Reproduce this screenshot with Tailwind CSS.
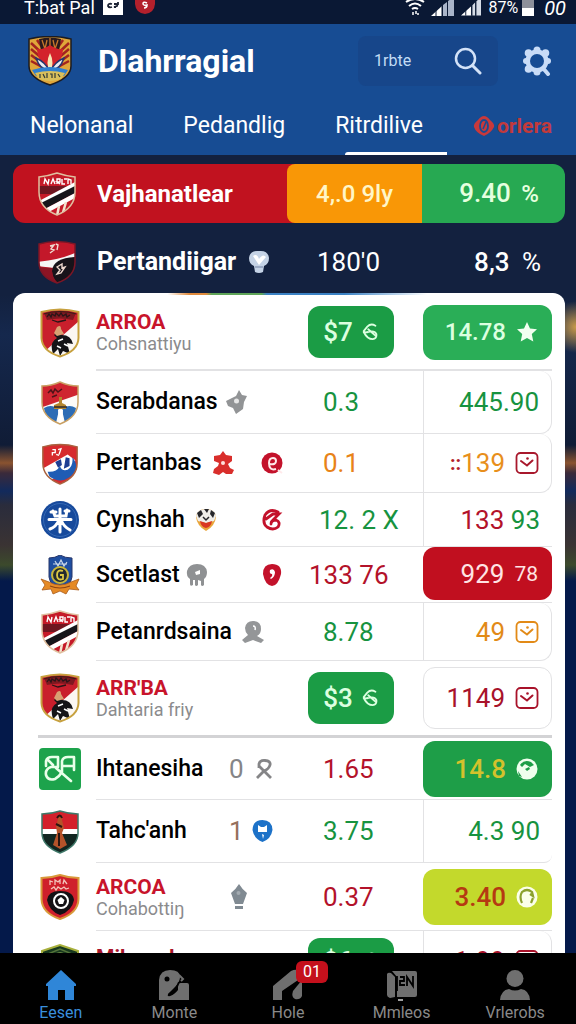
<!DOCTYPE html>
<html lang="id">

<head>
    <meta charset="UTF-8">
    <meta name="viewport" content="width=device-width, initial-scale=1.0">
    <title>Dlahrragial</title>
    <script src="https://cdn.jsdelivr.net/npm/@tailwindcss/browser@4"></script>
</head>

<body class="flex h-screen flex-col overflow-hidden bg-[#13213f] font-[Roboto,'Liberation_Sans',sans-serif]">
    <!-- Shared crests and icons -->
    <svg class="h-0 w-0 shrink-0" aria-hidden="true">
        <symbol id="crest-garuda" viewBox="0 0 44 50">
            <path d="M1 3Q22-2 43 3V30Q43 42 22 49Q1 42 1 30Z" fill="#e0a63a" stroke="#1c1b20" stroke-width="1.5" />
            <path d="M3 7l14 13M3 13l13 11M3 19l12 9M3 25l11 6M9 4l10 14M41 7L27 20M41 13L28 24M41 19L29 28M41 25L30 31M35 4L25 18" stroke="#a3231f" stroke-width="2.5" />
            <path d="M11 3Q22 0 33 3L31 15H13Z" fill="#2a1a1c" />
            <path d="M14 4l3 9 2-9M22 2v11M30 4l-3 9-2-9" fill="none" stroke="#c7772a" stroke-width="1.3" />
            <path d="M22 9Q15 14 9 13Q10 28 22 33Q34 28 35 13Q29 14 22 9Z" fill="#d3232b" />
            <path d="M8 22Q12 34 21 34Q17 26 8 22ZM36 22Q32 34 23 34Q27 26 36 22Z" fill="#e9ecf2" stroke="#26366e" stroke-width="1.5" />
            <path d="M22 17Q17 27 22 36Q27 27 22 17Z" fill="#f6e7b5" />
            <path d="M4 34Q22 28 40 34L36 40Q22 35 8 40Z" fill="#2f7fd0" />
            <path d="M7 37Q22 33 37 37L33 43Q22 47 11 43Z" fill="#d9bf5b" />
            <path d="M12 38v4M15 38l2 4M19 37v5M22 38h2v4M27 37v5M30 38l2 3" stroke="#2c3a3a" stroke-width="1.2" fill="none" />
        </symbol>

        <symbol id="crest-stripes" viewBox="0 0 40 44">
            <clipPath id="clip-stripes"><path d="M2 5Q11 4 20 1Q29 4 38 5V20Q38 36 20 43Q2 36 2 20Z" /></clipPath>
            <g clip-path="url(#clip-stripes)">
                <path d="M0 0h40v44H0z" fill="#c51a28" />
                <path d="M0 14h40v8H0z" fill="#6f1620" />
                <path d="M-2 31L40 9V14L0 36Z" fill="#fff" />
                <path d="M-2 34L40 13V20L4 39Z" fill="#16151a" />
                <path d="M4 39L40 20V25L8 42Z" fill="#fff" />
                <path d="M22 34L20 44M29 30l-4 14" stroke="#f3e3cf" stroke-width="2.5" />
            </g>
            <path d="M7 12l1-5 3 5 1-5M14 12l2-5 2 5M20 12V7h3v3h-3l3 2M25 7v5h3M30 7h-3M31 12V7l3 1v4" fill="none" stroke="#fff" stroke-width="1.4" />
            <path d="M2 5Q11 4 20 1Q29 4 38 5V20Q38 36 20 43Q2 36 2 20Z" fill="none" stroke="#e0c0a0" stroke-width="1.5" />
        </symbol>

        <symbol id="crest-falcon" viewBox="0 0 40 44">
            <clipPath id="clip-falcon"><path d="M2 4Q20-1 38 4V22Q38 37 20 43Q2 37 2 22Z" /></clipPath>
            <g clip-path="url(#clip-falcon)">
                <path d="M0 0h40v44H0z" fill="#c3182a" />
                <path d="M0 22Q22 20 38 13L40 17Q22 20 17 28L0 26Z" fill="#f5f5f5" />
                <path d="M38 17Q16 18 15 31Q16 42 24 46L42 40V17Z" fill="#17131a" />
                <path d="M0 27L15 28Q14 37 22 44H0Z" fill="#8c1424" />
            </g>
            <path d="M13 6l4-1-3 4 3 1-4 3M19 4l2 1-1 5M20 27l5-3v4l3-1-4 6-4 1 3-4z" fill="none" stroke="#efd9cf" stroke-width="1.4" />
            <path d="M2 4Q20-1 38 4V22Q38 37 20 43Q2 37 2 22Z" fill="none" stroke="#7c1626" stroke-width="1.5" />
        </symbol>

        <symbol id="crest-arroa" viewBox="0 0 40 50">
            <clipPath id="clip-arroa"><path d="M1.5 4Q20-1 38.5 4V30Q38 43 20 48.5Q2 43 1.5 30Z" /></clipPath>
            <g clip-path="url(#clip-arroa)">
                <path d="M0 0h40v50H0z" fill="#fbf7f3" />
                <path d="M0 0h40v12L4 44H0z" fill="#c91f2c" />
                <path d="M4 5Q20 1 36 5L33 12Q20 9 7 12Z" fill="#7f1820" />
                <path d="M12 42Q10 34 17 30L14 27Q18 22 22 27Q31 27 33 36L27 35L30 46L23 43L20 48L18 41L13 46Z" fill="#151417" />
                <path d="M17 19q4-3 4 2l3 5-7 2-3-3z" fill="#d8a072" />
                <path d="M18 33l5-2M24 36l4 2M17 38l4 2" stroke="#fff" stroke-width="1.5" />
            </g>
            <path d="M7 9l2-3 2 3 1-3 3 2 1-3 3 3 2-3 2 3 3-2 1 3 3-2M12 12l6 2 8-2" fill="none" stroke="#2a1517" stroke-width="1.3" />
            <path d="M1.5 4Q20-1 38.5 4V30Q38 43 20 48.5Q2 43 1.5 30Z" fill="none" stroke="#c7a13f" stroke-width="2" />
            <path d="M3.5 6Q20 1 36.5 6" fill="none" stroke="#3b1c18" stroke-width="1" />
        </symbol>

        <symbol id="crest-tower" viewBox="0 0 40 44">
            <clipPath id="clip-tower"><path d="M2 5Q11 5 20 1Q29 5 38 5V21Q38 36 20 43Q2 36 2 21Z" /></clipPath>
            <g clip-path="url(#clip-tower)">
                <path d="M0 0h40v44H0z" fill="#fdfbf8" />
                <path d="M0 0h40v13L0 27z" fill="#cf2530" />
                <path d="M4 27Q12 22 19 29L16 42L6 38ZM36 27Q28 22 22 29L25 42L34 38Z" fill="#2d6cb5" />
                <path d="M19 16h3v6l4 2v4H14v-4l5-2z" fill="#b5862d" />
                <path d="M18 29h5l-1 14h-3z" fill="#fff" />
                <path d="M14 26h13" stroke="#2e2a2b" stroke-width="1.5" />
            </g>
            <path d="M8 12l3-3 2 3 2-4 3 3 4-3M12 16l5-2" fill="none" stroke="#4e1418" stroke-width="1.5" />
            <path d="M2 5Q11 5 20 1Q29 5 38 5V21Q38 36 20 43Q2 36 2 21Z" fill="none" stroke="#c9a063" stroke-width="1.5" />
        </symbol>

        <symbol id="crest-wave" viewBox="0 0 40 44">
            <clipPath id="clip-wave"><path d="M2 4Q20-1 38 4V21Q38 36 20 43Q2 36 2 21Z" /></clipPath>
            <g clip-path="url(#clip-wave)">
                <path d="M0 0h40v44H0z" fill="#d62b2e" />
                <path d="M0 28L28 12L36 18L34 30L0 42Z" fill="#fff" />
                <path d="M7 30Q16 31 20 24Q22 30 28 28Q34 24 33 15Q42 26 30 36Q20 43 9 35Z" fill="#1f5cb4" />
                <path d="M15 20l6-3 1 6-4 3zM26 15l4 1v8l-6 3z" fill="#1d3e93" />
            </g>
            <path d="M12 7h3v3h-3v3M18 7l3-1-2 6M16 12l3 1" fill="none" stroke="#fff" stroke-width="1.4" />
            <path d="M2 4Q20-1 38 4V21Q38 36 20 43Q2 36 2 21Z" fill="none" stroke="#a9623f" stroke-width="1.5" />
        </symbol>

        <symbol id="crest-round" viewBox="0 0 40 40">
            <circle cx="20" cy="20" r="19" fill="#174a9c" />
            <circle cx="20" cy="20" r="16.5" fill="none" stroke="#3468b4" stroke-width="1" />
            <path d="M20 9V32M9 19.500H31M13 11l2 5 5 0M27 10l-1 6h-5M19 20Q16 27 10 29M21 20Q24 27 30 30M11 12h5M25 11h4" fill="none" stroke="#fff" stroke-width="3" stroke-linecap="round" />
        </symbol>

        <symbol id="crest-ribbon" viewBox="0 0 40 40">
            <path d="M9 3Q15 3 20 0Q25 3 32 3V22Q31 30 20 34Q10 30 9 22Z" fill="#1f4ea0" stroke="#27366b" />
            <path d="M13 9h14M15 6l3 5 3-6 3 6 3-4" stroke="#c9d6e8" stroke-width="1.2" fill="none" />
            <path d="M1 24L9 27Q20 33 31 27L39 24L36 31L39 35L29 34L26 39L20 36L13 39L11 34L2 35L5 30Z" fill="#e58a26" stroke="#a85a1c" stroke-width=".8" />
            <circle cx="20" cy="20" r="8" fill="#252b2e" stroke="#c9b63b" stroke-width="2" />
            <path d="M23 16q-6-2-6 4t6 4v-4h-3" fill="none" stroke="#dcc846" stroke-width="1.8" />
            <path d="M10 31Q20 35 30 31" fill="none" stroke="#8a4315" stroke-width="1.2" />
        </symbol>

        <symbol id="crest-figure" viewBox="0 0 40 44">
            <clipPath id="clip-figure"><path d="M2 4Q11 4 20 1Q29 4 38 4V23Q38 36 20 43Q2 36 2 23Z" /></clipPath>
            <g clip-path="url(#clip-figure)">
                <path d="M0 0h40v20H0z" fill="#d3202b" />
                <path d="M0 19h40v5H0z" fill="#fff" />
                <path d="M0 24h40v20H0z" fill="#122621" />
                <path d="M19 5q5 0 3 5l2 8-2 5 5 12-7 4-7-4 4-12-1-7z" fill="#b5532a" />
                <path d="M17 8q3-5 5 0M16 14l6 3M19 23v13" stroke="#2b1511" stroke-width="2" fill="none" />
            </g>
            <path d="M2 4Q11 4 20 1Q29 4 38 4V23Q38 36 20 43Q2 36 2 23Z" fill="none" stroke="#3e7768" stroke-width="1.5" />
        </symbol>

        <symbol id="crest-ball" viewBox="0 0 40 46">
            <path d="M1.5 4Q11 4 20 1Q29 4 38.5 4V25Q38 39 20 45Q2 39 1.5 25Z" fill="#cf202b" stroke="#d9993a" stroke-width="2" />
            <path d="M7 26Q8 17 20 17Q33 17 34 26Q32 37 20 41Q9 37 7 26Z" fill="#141215" />
            <circle cx="21" cy="27" r="7" fill="#141215" stroke="#fff" stroke-width="2" />
            <path d="M21 23l3.5 3-1.5 4h-4l-1.5-4z" fill="#fff" />
            <path d="M10 11V7l3 1M15 11V6l3 2 2-2v4M23 10l1-4 3 4M11 15l3-2 2 3 2-3 3 2 3-2 2 2 3-1" fill="none" stroke="#f3c4ba" stroke-width="1.3" />
        </symbol>

        <symbol id="crest-green" viewBox="0 0 40 46">
            <path d="M2 7L20 1L38 7V25Q38 39 20 45Q2 39 2 25Z" fill="#17381e" stroke="#a8b03c" stroke-width="2" />
            <circle cx="20" cy="17" r="8" fill="#0f2415" stroke="#7f9a4b" stroke-width="1.5" />
            <path d="M8 10l12-5 12 5" fill="none" stroke="#56753a" stroke-width="1.5" />
        </symbol>

        <symbol id="icon-mail" viewBox="0 0 24 24">
            <rect x="1.5" y="2" width="21" height="20" rx="4" fill="none" stroke="currentColor" stroke-width="1.8" />
            <path d="M6 10l6 4.5L17.5 9.500" fill="none" stroke="currentColor" stroke-width="2" stroke-linecap="round" />
            <circle cx="12.500" cy="7.500" r="1.300" fill="currentColor" />
        </symbol>

        <symbol id="icon-leaf" viewBox="0 0 20 20">
            <path d="M16 3Q11 0 7 4L3 9Q3 11 8 10Q15 8 17 12Q18 17 13 18Q7 18 3 10M8 7L16 14" fill="none" stroke="currentColor" stroke-width="2" stroke-linecap="round" stroke-linejoin="round" />
        </symbol>
    </svg>

    <!-- Status bar -->
    <div class="flex h-6 shrink-0 items-start bg-[#0a1834] pr-2.5 pl-6 text-lg leading-4 text-white">
        <span class="whitespace-nowrap">T:bat Pal</span>
        <svg class="ml-2 h-[15px] w-5" viewBox="0 0 20 15">
            <path d="M0 0h20v15H0z" fill="#fff" />
            <path d="M9 4Q5 3 5 6Q6 8 9 7M11 4h2q2 0 1 2l-3 1h2M15 2v3" fill="none" stroke="#1b2233" stroke-width="1.8" />
        </svg>
        <svg class="ml-3 h-[14px] w-5" viewBox="0 0 20 14">
            <path d="M0 0H20Q21 13 10 14Q-1 13 0 0Z" fill="#b3202c" />
            <path d="M12 3Q8 1 8 4Q9 6 12 5Q12 8 9 8" fill="none" stroke="#fff" stroke-width="1.6" />
        </svg>
        <svg class="ml-auto h-4 w-5" viewBox="0 0 20 16" fill="none" stroke="#fff" stroke-width="2">
            <path d="M1 2Q10-4 19 2M4 6Q10 1 16 6M7 9Q10 7 13 9" />
            <path d="M8 12v3M11 11v3M13 13v2" stroke-width="1.5" />
        </svg>
        <svg class="ml-1.5 h-4 w-6" viewBox="0 0 24 16">
            <path d="M0 16L11 6V16Z" fill="#fff" />
            <path d="M12 5l4-3v14h-4zM17 1l6-4v19h-6z" fill="#a9b4c9" />
            <path d="M5 9v7M11 4v12M16.500 0v16" stroke="#0a1834" />
        </svg>
        <svg class="ml-1.5 h-4 w-5" viewBox="0 0 21 16">
            <path d="M0 16L11 6V16Z" fill="#fff" />
            <path d="M12 5l3-3v14h-3zM16 1l5-4v19h-5z" fill="#d5dbe6" />
            <path d="M5 9v7M11 4v12M15.500 0v16" stroke="#0a1834" />
        </svg>
        <span class="ml-2 text-base leading-4">87%</span>
        <span class="ml-1 flex h-4 w-3 flex-col"><span class="h-2 bg-[#8d909a]"></span><span class="h-2 bg-white"></span></span>
        <span class="ml-2.5 text-xl leading-4 italic">00</span>
    </div>

    <!-- Header -->
    <header class="shrink-0 bg-[#174c93] text-white">
        <div class="flex h-[73px] items-center pr-6 pl-7">
            <svg class="h-[50px] w-11"><use href="#crest-garuda" /></svg>
            <h1 class="ml-[26px] text-[32px] leading-10 font-bold">Dlahrragial</h1>
            <div class="ml-auto flex h-[50px] w-[140px] items-center justify-between rounded-lg bg-[#17468a] pr-4 pl-4">
                <input type="text" aria-label="Search" placeholder="1rbte" class="w-14 bg-transparent text-base text-white outline-none placeholder:text-[#c3dcf5]">
                <button aria-label="Search" class="cursor-pointer">
                    <svg class="h-7 w-7" viewBox="0 0 28 28" fill="none" stroke="#d3e2f8" stroke-width="2.5" stroke-linecap="round">
                        <circle cx="11.5" cy="11.5" r="9.5" />
                        <path d="M18.5 18.5L26 26" stroke-width="3" />
                    </svg>
                </button>
            </div>
            <button aria-label="Settings" class="ml-6 cursor-pointer">
                <svg class="h-[30px] w-[30px]" viewBox="0 0 30 30">
                    <g fill="#c9dcf7">
                        <circle cx="15" cy="15" r="11.5" />
                        <circle cx="15" cy="4" r="3.5" />
                        <circle cx="23.5" cy="7" r="3.8" />
                        <circle cx="26" cy="15" r="3" />
                        <circle cx="6.5" cy="7" r="3.8" />
                        <circle cx="4" cy="15" r="3" />
                        <circle cx="6.5" cy="23" r="3.8" />
                        <circle cx="15" cy="26" r="3.5" />
                    </g>
                    <path d="M20 21l6 7" stroke="#c9dcf7" stroke-width="4" stroke-linecap="round" />
                    <circle cx="15" cy="15" r="7" fill="#174c93" />
                </svg>
            </button>
        </div>
        <nav class="flex h-[58px] gap-[50px] pl-[30px] text-[23px] leading-[58px] whitespace-nowrap">
            <a href="#">Nelonanal</a>
            <a href="#">Pedandlig</a>
            <a href="#" class="relative">Ritrdilive
                <span class="absolute -right-6 bottom-0 left-2.5 h-[3px] rounded-tl-full bg-white"></span>
            </a>
            <a href="#" class="flex items-center gap-0.5 text-[21px] font-bold text-[#c23a3c]">
                <svg class="h-[22px] w-[22px]" viewBox="0 0 22 22">
                    <path d="M11 1Q14 1 17 5Q22 9 21 12Q18 18 11 21Q3 18 1 12Q0 9 5 5Q8 1 11 1Z" fill="#c8393b" />
                    <ellipse cx="11" cy="11" rx="4" ry="6" fill="none" stroke="#174c93" stroke-width="1.8" />
                    <path d="M10 14l3-7" stroke="#174c93" stroke-width="1.5" />
                </svg>
                orlera
            </a>
        </nav>
    </header>

    <main class="min-h-0 flex-1 overflow-y-auto bg-[radial-gradient(circle_at_100%_172px,#c99a4a_0,#c99a4a00_26px),linear-gradient(#13213f_0,#13213f_140px,#15284d_180px,#101c36_290px,#8a5330_308px,#3b2a3a_318px,#122a5c_336px,#2a2c3c_350px,#3a3333_390px,#3c4a2c_410px,#04194a_426px)] pr-[11px] pl-[13px] [scrollbar-width:none]">
        <!-- Leaders -->
        <table class="mt-[9px] w-full table-fixed border-separate border-spacing-0 text-[26px] text-white">
            <tbody>
                <tr class="h-[59px]">
                    <td class="rounded-l-xl bg-[#c1121f] p-0">
                        <div class="flex items-center pl-6">
                            <svg class="h-11 w-10"><use href="#crest-stripes" /></svg>
                            <span class="ml-5 text-2xl font-bold">Vajhanatlear</span>
                        </div>
                    </td>
                    <td class="w-[135px] bg-[#c1121f] p-0"><div class="flex h-[59px] items-center justify-center rounded-l-lg bg-[#f99706] text-2xl font-medium text-[#fff6c8]">4,.0 9ly</div></td>
                    <td class="w-[143px] rounded-r-xl bg-[#27a952] p-0 pr-[26px] text-right font-medium text-[#e6ffdf]">9.40 <span class="ml-1 text-2xl">%</span></td>
                </tr>
                <tr class="h-[70px]">
                    <td class="p-0 pt-2">
                        <div class="flex items-center pl-6">
                            <svg class="h-11 w-10"><use href="#crest-falcon" /></svg>
                            <span class="ml-5 text-[25px] font-bold">Pertandiigar</span>
                            <svg class="ml-3 h-6 w-[22px] shrink-0" viewBox="0 0 22 24">
                                <path d="M11 1Q20 0 21 8Q21 14 16 16L15 22Q11 24 7 22L6 16Q1 14 1 8Q2 0 11 1Z" fill="#c5d3e6" />
                                <path d="M5 6Q9 3 11 9Q15 3 18 7L11 15Z" fill="#fff" />
                                <path d="M7 17h8" stroke="#8d9db8" stroke-width="1.5" />
                            </svg>
                        </div>
                    </td>
                    <td class="p-0 pt-2 pl-[30px]">180'0</td>
                    <td class="p-0 pt-2 pr-6 text-right font-medium">8,3 <span class="ml-1.5 font-normal">%</span></td>
                </tr>
            </tbody>
        </table>

        <!-- Standings -->
        <div class="overflow-hidden rounded-xl bg-white">
            <div class="h-0.5 bg-[linear-gradient(90deg,transparent_28%,#e08a3c_32%,#e08a3c_35%,#5fa558_36%,#5fa558_45%,#3b82c4_46%,#3b82c4_60%,transparent_75%)]"></div>
            <div class="pr-[13px] pl-[25px]">
                <table class="w-full table-fixed border-separate border-spacing-0 text-[26px] leading-7">
                    <colgroup>
                        <col class="w-[58px]">
                        <col>
                        <col class="w-[114px]">
                        <col class="w-[129px]">
                    </colgroup>
                    <tbody>
                        <tr class="h-[76px]">
                            <td class="p-0"><svg class="ml-0.5 h-[50px] w-10"><use href="#crest-arroa" /></svg></td>
                            <td class="border-b-2 border-[#e2e2e4] p-0">
                                <div class="text-[21px] leading-6 font-bold text-[#c8142b]">ARROA</div>
                                <div class="text-lg leading-5 text-[#8b8b8d]">Cohsnattiyu</div>
                            </td>
                            <td class="border-b-2 border-[#e2e2e4] p-0">
                                <div class="-ml-px flex h-[52px] w-[86px] items-center justify-center gap-2 rounded-xl bg-[#1b9c45] font-medium text-[#dcffe0]">$7 <svg class="h-[18px] w-[18px]"><use href="#icon-leaf" /></svg></div>
                            </td>
                            <td class="border-b-2 border-[#e2e2e4] p-0">
                                <div class="flex h-[55px] items-center justify-end gap-2.5 rounded-xl bg-[#2aae57] pr-3.5 text-2xl font-medium text-[#dcffe0]">14.78
                                    <svg class="h-[22px] w-[22px]" viewBox="0 0 22 22"><path d="M11 1l3 6.5 7 .8-5.2 4.7 1.5 7.5L11 17l-6.3 3.5 1.5-7.5L1 8.300l7-.8z" fill="#f2fff0" /></svg>
                                </div>
                            </td>
                        </tr>
                        <tr class="h-[63px]">
                            <td class="p-0"><svg class="ml-0.5 h-11 w-10"><use href="#crest-tower" /></svg></td>
                            <td class="border-b border-[#e2e2e4] p-0">
                                <div class="flex items-center gap-2 text-[23px] font-medium">Serabdanas
                                    <svg class="h-6 w-[22px]" viewBox="0 0 22 24">
                                        <path d="M13 0L16 5L21 6L18 12L17 19L10 24L7 18L2 16L0 11L6 8L10 6Z" fill="#929496" />
                                        <circle cx="10.5" cy="11" r="2.500" fill="#e6e6e6" />
                                    </svg>
                                </div>
                            </td>
                            <td class="border-b border-[#e2e2e4] p-0 pl-3.5 text-[#17933f]">0.3</td>
                            <td class="rounded-r-xl border border-t-0 border-[#e2e2e4] p-0 pr-3 text-right text-[#17933f]">445.90</td>
                        </tr>
                        <tr class="h-[59px]">
                            <td class="p-0"><svg class="ml-0.5 h-[42px] w-10"><use href="#crest-wave" /></svg></td>
                            <td class="border-b border-[#e2e2e4] p-0 pr-[26px]">
                                <div class="flex items-center gap-1.5 text-[23px] font-medium">Pertanbas
                                    <svg class="ml-1 h-6 w-[22px]" viewBox="0 0 22 24">
                                        <path d="M11 0L14 4L20 5V10L16 13L18 17L22 19L20 23H14L11 21L7 24L1 22L2 18L6 15L7 12L2 10L2 5L8 4Z" fill="#d92e2b" />
                                        <circle cx="11" cy="12" r="2" fill="#ffe1dc" />
                                    </svg>
                                    <svg class="ml-auto h-[22px] w-[22px]" viewBox="0 0 22 22">
                                        <circle cx="11" cy="11" r="10.5" fill="#c3122b" />
                                        <path d="M15 17q-7 2-7-6 0-5 4-5 3 0 3 3 0 4-6 3M17 18l4 3" fill="none" stroke="#ffe9ea" stroke-width="2" />
                                    </svg>
                                </div>
                            </td>
                            <td class="border-b border-[#e2e2e4] p-0 pl-3.5 text-[#e88318]">0.1</td>
                            <td class="rounded-r-xl border border-t-0 border-[#e2e2e4] p-0">
                                <div class="flex items-center justify-end pr-3 text-[#e88f1c]"><span class="text-xl font-bold text-[#b3202c]">::</span>139<svg class="ml-2.5 h-6 w-6 text-[#a8182c]"><use href="#icon-mail" /></svg></div>
                            </td>
                        </tr>
                        <tr class="h-[54px]">
                            <td class="p-0"><svg class="ml-0.5 h-10 w-10"><use href="#crest-round" /></svg></td>
                            <td class="border-b border-[#e2e2e4] p-0 pr-[26px]">
                                <div class="flex items-center gap-2.5 text-[23px] font-medium">Cynshah
                                    <svg class="h-6 w-[22px]" viewBox="0 0 22 24">
                                        <path d="M11 1Q20 1 21 9Q20 18 11 23Q2 18 1 9Q2 1 11 1Z" fill="#e9a53a" />
                                        <path d="M11 1Q20 1 21 8L19 13L11 15L3 13L1 8Q2 1 11 1Z" fill="#f0eeea" />
                                        <path d="M2 5l4-3 2 4-4 4zM9 1h5l-2 4zM20 5l-4-3-1 4 3 4z" fill="#26262a" />
                                        <path d="M8 9l3 3 3-3" fill="none" stroke="#26262a" stroke-width="1.5" />
                                        <path d="M5 13l6 2 6-2q-1 6-6 7-5-1-6-7z" fill="#d93722" />
                                    </svg>
                                    <svg class="ml-auto h-[22px] w-[22px]" viewBox="0 0 22 22" fill="none" stroke="#c3122b" stroke-width="2.8" stroke-linecap="round">
                                        <path d="M17 3Q9-1 4 6Q1 14 6 18Q12 22 17 18Q20 13 15 11Q10 11 10 15M5 10L12 5L18 5L12 11" />
                                    </svg>
                                </div>
                            </td>
                            <td class="border-b border-[#e2e2e4] p-0 pl-2.5 whitespace-nowrap text-[#17933f]">12. 2 X</td>
                            <td class="border-b border-l border-[#e2e2e4] p-0 pr-3 text-right text-[#b3122a]">133 <span class="text-[#17933f]">93</span></td>
                        </tr>
                        <tr class="h-14">
                            <td class="p-0"><svg class="ml-0.5 h-10 w-10"><use href="#crest-ribbon" /></svg></td>
                            <td class="border-b border-[#e2e2e4] p-0 pr-[26px]">
                                <div class="flex items-center gap-1.5 text-[23px] font-medium">Scetlast
                                    <svg class="h-6 w-[22px]" viewBox="0 0 22 24">
                                        <path d="M11 1Q20 1 21 9Q21 14 18 16V22Q16 24 15 22V18L12 17V22Q10 24 9 22V17H7V22Q4 24 4 21V16Q0 13 1 8Q3 1 11 1Z" fill="#8f9193" />
                                        <path d="M9 9l5-2v4l-4 1z" fill="#fff" />
                                    </svg>
                                    <svg class="ml-auto h-6 w-[22px]" viewBox="0 0 22 24">
                                        <path d="M11 1Q21 1 20 11Q17 23 11 23Q4 22 2 11Q2 1 11 1Z" fill="#c3122b" />
                                        <path d="M9 7q4-2 5 2 0 5-4 7l-1-1q3-2 2-4-3 0-2-4z" fill="#fff" />
                                    </svg>
                                </div>
                            </td>
                            <td class="border-b border-[#e2e2e4] p-0 whitespace-nowrap text-[#b3122a]">133 76</td>
                            <td class="border-b border-[#e2e2e4] p-0">
                                <div class="-mt-0.5 flex h-[53px] items-center justify-end gap-2.5 rounded-xl bg-[#c10f1f] pr-3.5 text-[#ffe4e4]">929 <span class="text-[21px]">78</span></div>
                            </td>
                        </tr>
                        <tr class="h-[58px]">
                            <td class="p-0"><svg class="ml-0.5 h-11 w-10"><use href="#crest-stripes" /></svg></td>
                            <td class="border-b border-[#e2e2e4] p-0">
                                <div class="flex items-center gap-2.5 text-[23px] font-medium">Petanrdsaina
                                    <svg class="h-6 w-[22px]" viewBox="0 0 22 24">
                                        <path d="M11 1Q19 1 19 9Q19 14 15 16L22 20L19 23L11 20L3 23L0 20L6 15Q3 12 3 8Q4 1 11 1Z" fill="#949698" />
                                        <path d="M11 6q3 0 2 4" fill="none" stroke="#fff" stroke-width="1.5" />
                                    </svg>
                                </div>
                            </td>
                            <td class="border-b border-[#e2e2e4] p-0 pl-3.5 text-[#17933f]">8.78</td>
                            <td class="rounded-r-xl border border-[#e2e2e4] border-t-0 p-0">
                                <div class="flex items-center justify-end gap-2.5 pr-3 text-[#e28a17]">49<svg class="h-6 w-6"><use href="#icon-mail" /></svg></div>
                            </td>
                        </tr>
                        <tr class="h-[77px]">
                            <td class="border-b-3 border-[#d3d3d5] p-0"><svg class="ml-0.5 h-[50px] w-10"><use href="#crest-arroa" /></svg></td>
                            <td class="border-b-3 border-[#d3d3d5] p-0">
                                <div class="text-[21px] leading-6 font-bold text-[#c8142b]">ARR'BA</div>
                                <div class="text-lg leading-5 text-[#8b8b8d]">Dahtaria friy</div>
                            </td>
                            <td class="border-b-3 border-[#d3d3d5] p-0">
                                <div class="-ml-px flex h-[52px] w-[86px] items-center justify-center gap-2 rounded-xl bg-[#1b9c45] font-medium text-[#dcffe0]">$3 <svg class="h-[18px] w-[18px]"><use href="#icon-leaf" /></svg></div>
                            </td>
                            <td class="border-b-3 border-[#d3d3d5] p-0">
                                <div class="flex h-[62px] items-center justify-end gap-2.5 rounded-xl border border-[#e2e2e4] pr-3 text-[#a8122a]">1149<svg class="h-6 w-6"><use href="#icon-mail" /></svg></div>
                            </td>
                        </tr>
                        <tr class="h-[62px]">
                            <td class="p-0">
                                <svg class="ml-px h-[42px] w-[42px]" viewBox="0 0 42 42">
                                    <rect width="42" height="42" rx="4" fill="#1da34c" />
                                    <path d="M7 18V13Q8 9 13 9H19V19H12Q6 21 7 27Q9 33 16 31Q20 29 23 24V13Q24 9 29 9H35V22M23 18H35M17 20L32 33M9 12l5 5" fill="none" stroke="#e9ffe9" stroke-width="2.600" stroke-linecap="round" stroke-linejoin="round" />
                                </svg>
                            </td>
                            <td class="border-b border-[#e2e2e4] p-0 pr-9">
                                <div class="flex items-center justify-between text-[23px] font-medium">Ihtanesiha
                                    <span class="flex w-11 items-center justify-between text-[26px] font-normal text-[#858587]">0
                                        <svg class="h-5 w-[17px]" viewBox="0 0 17 20" fill="none" stroke="currentColor" stroke-width="2.8">
                                            <path d="M3 9V5Q4 1 9 1.500Q15 2 14 6Q13 10 8 12L1 19M3 7L15 19" />
                                        </svg>
                                    </span>
                                </div>
                            </td>
                            <td class="border-b border-[#e2e2e4] p-0 pl-3.5 text-[#b3122a]">1.65</td>
                            <td class="border-b border-[#e2e2e4] p-0">
                                <div class="flex h-14 items-center justify-end gap-2.5 rounded-xl bg-[#1e9e48] pr-3.5 font-medium text-[#d3c22c]">14.8
                                    <svg class="h-[22px] w-[22px]" viewBox="0 0 22 22">
                                        <circle cx="11" cy="11" r="10.5" fill="#efffee" />
                                        <path d="M4 7Q8 1 15 4L18 7L14 9L9 6L6 9ZM9 11l4-2 1 2-3 2zM2 13l4 6-3-1z" fill="#1e9e48" />
                                    </svg>
                                </div>
                            </td>
                        </tr>
                        <tr class="h-[63px]">
                            <td class="p-0"><svg class="ml-0.5 h-11 w-10"><use href="#crest-figure" /></svg></td>
                            <td class="border-b border-[#e2e2e4] p-0 pr-9">
                                <div class="flex items-center justify-between text-[23px] font-medium">Tahc'anh
                                    <span class="flex w-11 items-center justify-between text-[26px] font-normal text-[#96705c]">1
                                        <svg class="h-6 w-[21px]" viewBox="0 0 21 24">
                                            <path d="M10.5 1Q20 1 20.5 11Q19 20 10.5 23Q2 20 .5 11Q1 1 10.5 1Z" fill="#1d72c8" />
                                            <path d="M6 6l3 2h3l3-2v7h-9zM10 15l2 1-1 4z" fill="#fff" />
                                        </svg>
                                    </span>
                                </div>
                            </td>
                            <td class="border-b border-[#e2e2e4] p-0 pl-3.5 text-[#17933f]">3.75</td>
                            <td class="rounded-br-lg border-b border-l border-[#e2e2e4] p-0 pr-3 text-right text-[#17933f]">4.3 90</td>
                        </tr>
                        <tr class="h-[68px]">
                            <td class="p-0"><svg class="ml-0.5 h-[46px] w-10"><use href="#crest-ball" /></svg></td>
                            <td class="border-b border-[#e2e2e4] p-0 pr-9">
                                <div class="flex items-center justify-between">
                                    <div>
                                        <div class="text-[21px] leading-6 font-bold text-[#c8142b]">ARCOA</div>
                                        <div class="text-lg leading-5 text-[#8b8b8d]">Cohabottiŋ</div>
                                    </div>
                                    <span class="flex w-11">
                                        <svg class="ml-0.5 h-[26px] w-4" viewBox="0 0 16 26">
                                            <path d="M8 0Q11 5 16 9L12 20H4L0 9Q5 5 8 0ZM4 22h8v3H4z" fill="#808a92" />
                                            <circle cx="7.5" cy="9" r="2" fill="#a3abb1" />
                                        </svg>
                                    </span>
                                </div>
                            </td>
                            <td class="border-b border-[#e2e2e4] p-0 pl-3.5 text-[#b3122a]">0.37</td>
                            <td class="border-b border-[#e2e2e4] p-0">
                                <div class="flex h-14 items-center justify-end gap-2.5 rounded-xl bg-[#c3d92c] pr-3.5 font-medium text-[#b53a12]">3.40
                                    <svg class="h-[22px] w-[22px]" viewBox="0 0 22 22">
                                        <circle cx="11" cy="11" r="10.5" fill="#fbffe9" />
                                        <path d="M6 17Q3 11 6 6Q11 2 16 6L17 10L14 8M17 12l-2 5" fill="none" stroke="#8ba12c" stroke-width="2.2" />
                                    </svg>
                                </div>
                            </td>
                        </tr>
                        <tr class="h-[72px]">
                            <td class="p-0"><svg class="ml-0.5 h-[46px] w-10"><use href="#crest-green" /></svg></td>
                            <td class="p-0">
                                <div class="text-[21px] leading-6 font-bold text-[#a8142b]">Mikawal</div>
                                <div class="text-lg leading-5 text-[#8b8b8d]">Cohanattiyu</div>
                            </td>
                            <td class="p-0">
                                <div class="-ml-px flex h-[58px] w-[86px] items-center justify-center gap-2 rounded-xl bg-[#1b9c45] pb-3 font-medium text-[#dcffe0]">$6 <svg class="h-[18px] w-[18px]"><use href="#icon-leaf" /></svg></div>
                            </td>
                            <td class="rounded-r-xl border border-t-0 border-[#e2e2e4] p-0">
                                <div class="flex items-center justify-end gap-2.5 pr-3 pb-3 text-[#a8122a]">1.99<svg class="h-6 w-6"><use href="#icon-mail" /></svg></div>
                            </td>
                        </tr>
                    </tbody>
                </table>
            </div>
        </div>
    </main>

    <!-- Bottom navigation -->
    <nav class="grid h-[71px] shrink-0 grid-cols-5 bg-black px-1 pt-4 text-base leading-4 text-[#8a8a8a]">
        <a href="#" class="flex flex-col items-center gap-1 text-[#3a8fdc]">
            <svg class="h-8 w-8" viewBox="0 0 32 32"><path d="M16 1L31 15V17H29V31H20V21H13V31H3V17H1V15Z" fill="#2f86d8" /></svg>
            Eesen
        </a>
        <a href="#" class="flex flex-col items-center gap-1">
            <svg class="h-8 w-8" viewBox="0 0 32 32">
                <path d="M1 31V11Q2 1 12 1Q22 1 22 8Q22 12 18 17L10 25Q9 28 12 27Q16 26 20 21V15Q21 14 23 14H29Q31 14 31 16V31Z" fill="#6f6f6f" />
                <path d="M22 13L19 20Q16 26 10 27Q9 25 14 22Q19 17 20 13Z" fill="#000" />
                <path d="M21 6l4 4-2 2" stroke="#6f6f6f" stroke-width="2" fill="none" />
                <circle cx="9" cy="10" r="2.5" fill="#000" />
            </svg>
            Monte
        </a>
        <a href="#" class="relative flex flex-col items-center gap-1">
            <svg class="h-8 w-8" viewBox="0 0 32 32">
                <path d="M1 31V17L19 2Q25-1 29 3V9L10 22V31Z" fill="#6f6f6f" />
                <path d="M30 11V27Q28 31 23 30Q19 28 21 22Z" fill="#6f6f6f" />
            </svg>
            Hole
            <span class="absolute -top-2 left-1/2 ml-2 h-[22px] w-8 rounded-md bg-[#c4101c] text-center text-base leading-[22px] text-white">01</span>
        </a>
        <a href="#" class="flex flex-col items-center gap-1">
            <svg class="h-8 w-8" viewBox="0 0 32 32">
                <path d="M1 5Q2 3 5 4L9 8V28L4 29Q1 28 1 26ZM6 2H29Q31 2 31 4V26Q31 28 29 28H11V8Z" fill="#6f6f6f" />
                <path d="M11 7V22M14 8h4v4h-4v4h5M21 17V8l6 9V7" stroke="#000" stroke-width="1.8" fill="none" />
                <path d="M12 31h5" stroke="#a0a0a0" stroke-width="2" />
            </svg>
            Mmleos
        </a>
        <a href="#" class="flex flex-col items-center gap-1">
            <svg class="h-8 w-8" viewBox="0 0 32 32"><circle cx="16" cy="9.5" r="8.5" fill="#6f6f6f" /><path d="M1 31Q2 21 10 20Q16 23 22 20Q30 21 31 31Z" fill="#6f6f6f" /></svg>
            Vrlerobs
        </a>
    </nav>
</body>

</html>
